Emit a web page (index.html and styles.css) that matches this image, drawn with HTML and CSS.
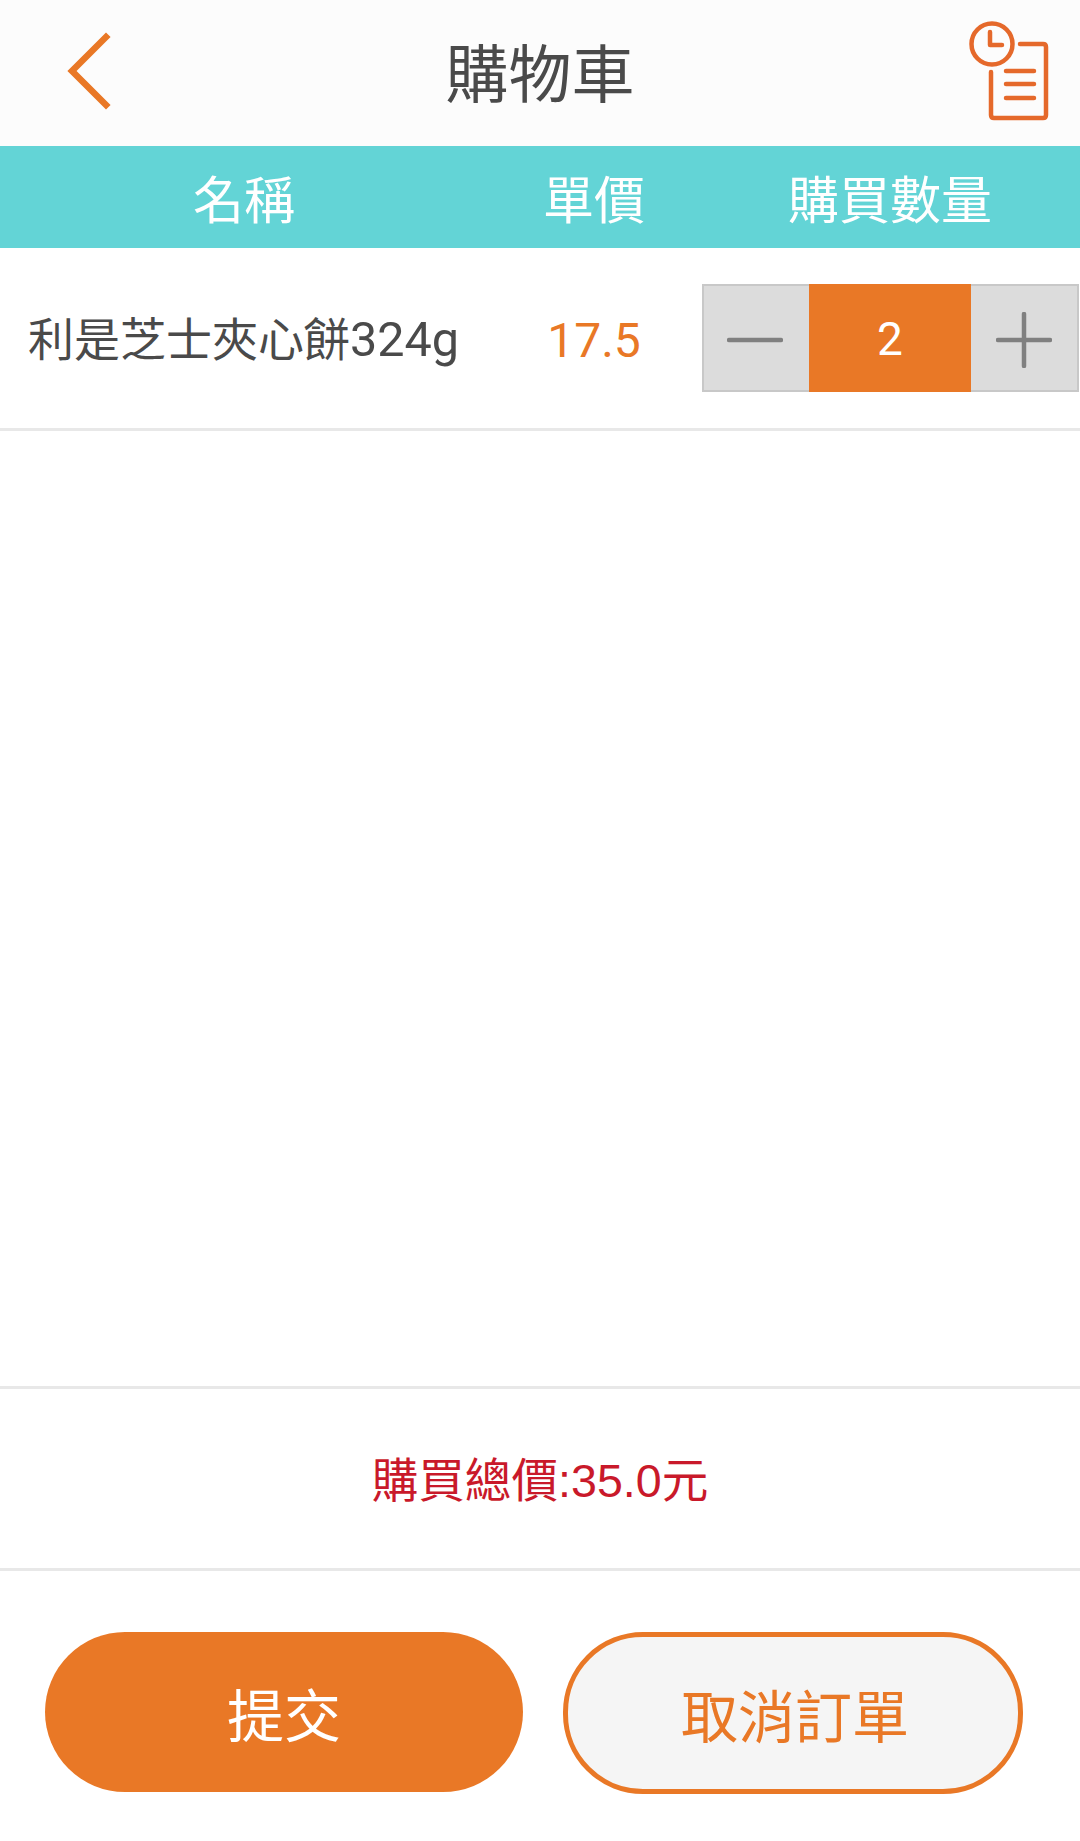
FILE: index.html
```html
<!DOCTYPE html>
<html lang="zh-Hant">
<head>
<meta charset="utf-8">
<title>購物車</title>
<link rel="stylesheet" href="styles.css">
</head>
<body>
<div class="page">
  <header class="topbar">
    <svg class="back" viewBox="0 0 60 100" width="60" height="100"><path d="M44 14 L10 48 L44 82" fill="none" stroke="#e97826" stroke-width="6.5" stroke-linecap="square" stroke-linejoin="miter"/></svg>
    <h1 class="title">購物車</h1>
    <svg class="history" viewBox="960 0 100 130" width="100" height="130">
      <g fill="none" stroke="#e5692b" stroke-width="4.5" stroke-linecap="round" stroke-linejoin="round">
        <circle cx="992" cy="44" r="20.5"/>
        <path d="M990 32 V45 H1002"/>
        <path d="M1020 44 H1043 Q1046 44 1046 47 V115 Q1046 118 1043 118 H994 Q991 118 991 115 V72"/>
        <path d="M1006 71 H1034 M1006 84 H1034 M1006 98 H1034"/>
      </g>
    </svg>
  </header>
  <div class="columns">
    <div>名稱</div>
    <div>單價</div>
    <div>購買數量</div>
  </div>
  <div class="item">
    <div class="item-name">利是芝士夾心餅<span class="item-unit">324g</span></div>
    <div class="item-price">17.5</div>
    <div class="stepper">
      <div class="step">
        <svg viewBox="0 0 56 56" width="56" height="56"><path d="M2 28 H54" stroke="#808080" stroke-width="4.5" stroke-linecap="round"/></svg>
      </div>
      <div class="qty">2</div>
      <div class="step step-plus">
        <svg viewBox="0 0 56 56" width="56" height="56"><path d="M2 28 H54 M28 2 V54" stroke="#808080" stroke-width="4.5" stroke-linecap="round"/></svg>
      </div>
    </div>
  </div>
  <div class="list-space"></div>
  <div class="total">購買總價:35.0元</div>
  <div class="actions">
    <button class="btn btn-submit" type="button">提交</button>
    <button class="btn btn-cancel" type="button">取消訂單</button>
  </div>
</div>
</body>
</html>
```
FILE: styles.css
```css
* { box-sizing: border-box; }
html, body { margin: 0; padding: 0; background: #fff; }
body { font-family: Roboto, "Noto Sans CJK TC", sans-serif; }
.page { width: 1080px; height: 1841px; display: flex; flex-direction: column; background: #fff; }

.topbar { height: 146px; display: grid; grid-template-columns: 1fr auto 1fr; align-items: center; background: #fcfcfc; }
.back { display: block; margin-left: 62px; }
.title { margin: 0; padding-top: 6px; font-size: 63px; font-weight: 400; color: #4a4a4a; line-height: 140px; }
.history { display: block; justify-self: end; align-self: start; margin-right: 20px; }

.columns { height: 102px; display: grid; grid-template-columns: 488px 212px 380px; align-items: center; background: #63d4d6; color: #fff; font-size: 51px; text-align: center; }

.item { height: 183px; display: grid; grid-template-columns: 488px 212px 380px; align-items: center; border-bottom: 3px solid #e8e8e8; }
.item-name { padding: 0 0 4px 28px; font-size: 46px; color: #4a4a4a; white-space: nowrap; }
.item-unit { font-size: 48.5px; }
.item-price { padding-top: 4px; font-size: 48px; color: #e97826; text-align: center; }

.stepper { width: 377px; height: 108px; margin-left: 2px; display: grid; grid-template-columns: 107px 162px 108px; }
.step { display: flex; align-items: center; justify-content: center; padding: 4px 4px 0 0; background: #dcdcdc; border: 2px solid #c8c8c8; border-right: 0; }
.step-plus { padding-right: 0; border-right: 2px solid #c8c8c8; border-left: 0; }
.qty { display: flex; align-items: center; justify-content: center; padding-top: 2px; background: #e97826; color: #fff; font-size: 46px; }

.list-space { flex: 1; }

.total { height: 185px; display: flex; align-items: center; justify-content: center; padding-bottom: 4px; border-top: 3px solid #e8e8e8; border-bottom: 3px solid #e8e8e8; font-family: "Liberation Sans", "Noto Sans CJK TC", sans-serif; font-size: 46.6px; color: #c9192a; }

.actions { height: 270px; display: flex; align-items: flex-start; padding: 61px 0 0 45px; gap: 40px; }
.btn { height: 160px; border-radius: 80px; font-family: inherit; font-size: 57px; padding: 0; }
.btn-submit { width: 478px; background: #e97826; color: #fff; border: 0; }
.btn-cancel { width: 460px; height: 162px; padding-left: 4px; background: #f5f5f5; color: #e97826; border: 5px solid #e97826; }
```
